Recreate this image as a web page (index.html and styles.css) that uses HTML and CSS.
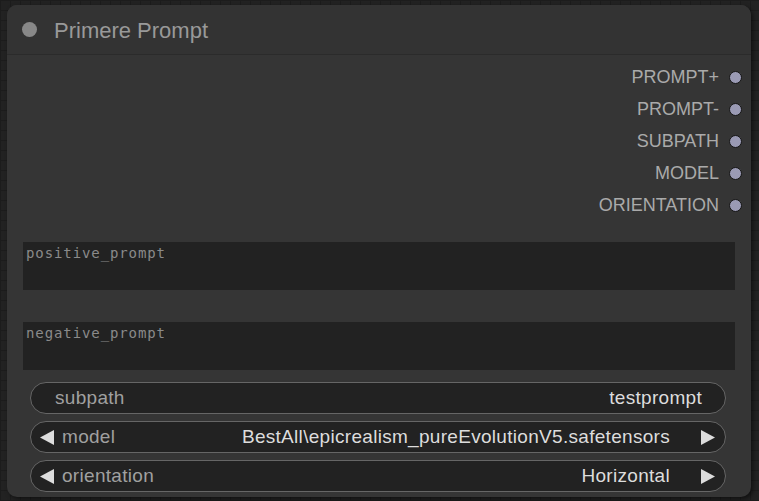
FILE: index.html
```html
<!DOCTYPE html>
<html>
<head>
<meta charset="utf-8">
<link rel="stylesheet" href="styles.css">
</head>
<body>
<div class="node">
  <div class="title">
    <span class="title-dot"></span>
    <span class="title-text">Primere Prompt</span>
  </div>
  <div class="body">
    <ul class="outputs">
      <li class="out"><span>PROMPT+</span><i class="slot"></i></li>
      <li class="out"><span>PROMPT-</span><i class="slot"></i></li>
      <li class="out"><span>SUBPATH</span><i class="slot"></i></li>
      <li class="out"><span>MODEL</span><i class="slot"></i></li>
      <li class="out"><span>ORIENTATION</span><i class="slot"></i></li>
    </ul>
    <div class="areas">
      <div class="area">positive_prompt</div>
      <div class="area">negative_prompt</div>
    </div>
    <div class="widgets">
      <div class="widget">
        <span class="label label-plain">subpath</span>
        <span class="value value-plain">testprompt</span>
      </div>
      <div class="widget">
        <svg class="arrow" width="14" height="15" viewBox="0 0 14 15"><polygon points="14,0 14,15 0,7.5" fill="#dddddd"/></svg>
        <span class="label">model</span>
        <span class="value">BestAll\epicrealism_pureEvolutionV5.safetensors</span>
        <svg class="arrow" width="14" height="15" viewBox="0 0 14 15"><polygon points="0,0 0,15 14,7.5" fill="#dddddd"/></svg>
      </div>
      <div class="widget">
        <svg class="arrow" width="14" height="15" viewBox="0 0 14 15"><polygon points="14,0 14,15 0,7.5" fill="#dddddd"/></svg>
        <span class="label">orientation</span>
        <span class="value">Horizontal</span>
        <svg class="arrow" width="14" height="15" viewBox="0 0 14 15"><polygon points="0,0 0,15 14,7.5" fill="#dddddd"/></svg>
      </div>
    </div>
  </div>
</div>
</body>
</html>
```

FILE: styles.css
```css
html, body {
  margin: 0;
  padding: 0;
}
body {
  width: 759px;
  height: 501px;
  overflow: hidden;
  background-color: #222222;
  background-image:
    linear-gradient(#1c1c1c 1px, transparent 1px),
    linear-gradient(90deg, #1c1c1c 1px, transparent 1px);
  background-size: 10px 10px;
  font-family: "Liberation Sans", Arial, sans-serif;
  padding: 5px 8px 4px 7px;
  box-sizing: border-box;
}
.node {
  width: 744px;
  height: 492px;
  background: #353535;
  border-radius: 10px;
  box-shadow: 2px 2px 4px rgba(0,0,0,0.5);
  display: flex;
  flex-direction: column;
  overflow: hidden;
}
.title {
  height: 49px;
  background: #333333;
  border-bottom: 1px solid #2b2b2b;
  display: flex;
  align-items: center;
  flex-shrink: 0;
}
.title-dot {
  width: 15px;
  height: 15px;
  border-radius: 50%;
  background: #888888;
  margin-left: 15px;
  margin-right: 17px;
}
.title-text {
  color: #999999;
  font-size: 22px;
  position: relative;
  top: 1px;
}
.body {
  display: flex;
  flex-direction: column;
  padding-top: 6px;
}
.outputs {
  list-style: none;
  margin: 0;
  padding: 0 9px 0 0;
  display: flex;
  flex-direction: column;
  align-items: flex-end;
}
.out {
  height: 32px;
  display: flex;
  align-items: center;
  gap: 10px;
  color: #aaaaaa;
  font-size: 18px;
}
.slot {
  width: 11px;
  height: 11px;
  border-radius: 50%;
  background: #9a9ab4;
  border: 1.5px solid #151515;
}
.areas {
  display: flex;
  flex-direction: column;
  gap: 32px;
  margin: 21px 16px 0 16px;
}
.area {
  height: 48px;
  background: #222222;
  color: #8a8a8a;
  font-family: "DejaVu Sans Mono", monospace;
  font-size: 14px;
  letter-spacing: 0.9px;
  padding: 3px 3px;
  box-sizing: border-box;
}
.widgets {
  display: flex;
  flex-direction: column;
  gap: 7px;
  margin: 12px 25px 0 23px;
}
.widget {
  height: 32px;
  box-sizing: border-box;
  border: 1px solid #666666;
  border-radius: 16px;
  background: #222222;
  display: flex;
  align-items: center;
  padding: 0 10px 0 9px;
  font-size: 19px;
  letter-spacing: 0.3px;
}
.arrow {
  flex-shrink: 0;
  display: block;
}
.label {
  color: #a0a0a0;
  margin-left: 8px;
}
.label-plain {
  margin-left: 15px;
}
.value {
  color: #dddddd;
  margin-left: auto;
  margin-right: 31px;
}
.value-plain {
  margin-right: 13px;
}
```
